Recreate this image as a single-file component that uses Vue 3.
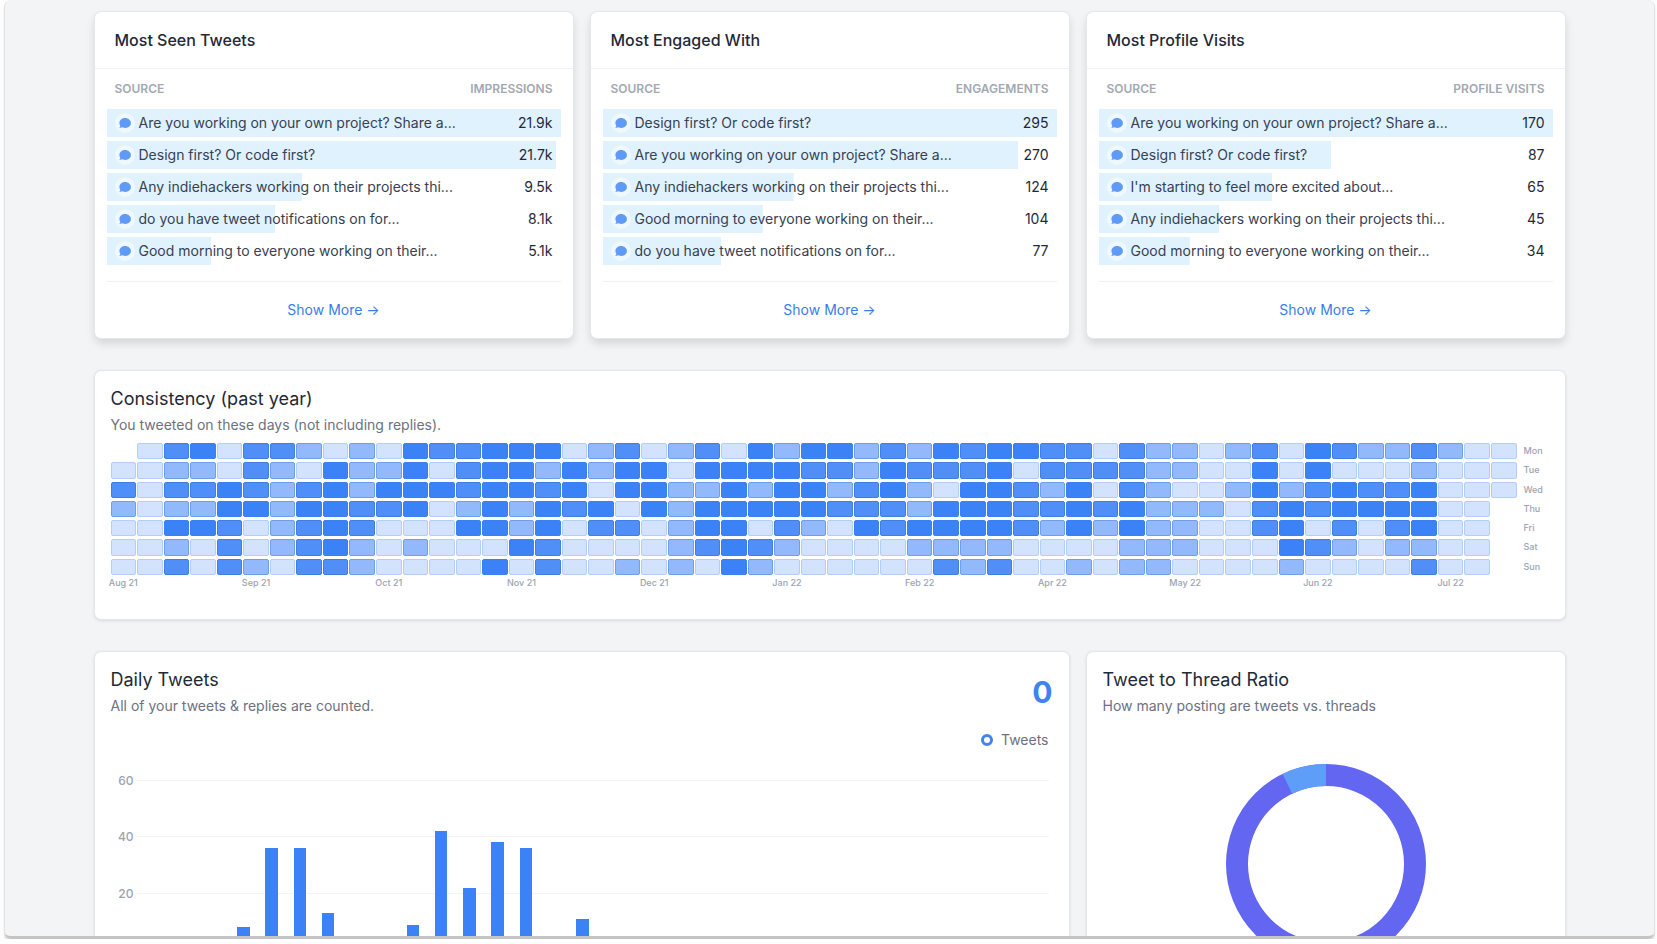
<script setup>
const tables = [
  {
    title: 'Most Seen Tweets',
    metric: 'Impressions',
    rows: [
      ['Are you working on your own project? Share a...', '21.9k', 100],
      ['Design first? Or code first?', '21.7k', 99],
      ['Any indiehackers working on their projects thi...', '9.5k', 43],
      ['do you have tweet notifications on for...', '8.1k', 37],
      ['Good morning to everyone working on their...', '5.1k', 23],
    ],
  },
  {
    title: 'Most Engaged With',
    metric: 'Engagements',
    rows: [
      ['Design first? Or code first?', '295', 100],
      ['Are you working on your own project? Share a...', '270', 91.5],
      ['Any indiehackers working on their projects thi...', '124', 42],
      ['Good morning to everyone working on their...', '104', 35.2],
      ['do you have tweet notifications on for...', '77', 26],
    ],
  },
  {
    title: 'Most Profile Visits',
    metric: 'Profile Visits',
    rows: [
      ['Are you working on your own project? Share a...', '170', 100],
      ['Design first? Or code first?', '87', 51.2],
      ["I'm starting to feel more excited about...", '65', 38.2],
      ['Any indiehackers working on their projects thi...', '45', 26.5],
      ['Good morning to everyone working on their...', '34', 20],
    ],
  },
]

// One digit per week: 0 is outside the range, 1 to 4 is the activity level.
const days = [
  ['Mon', '01341332121433444123123142442324344331322123143223211'],
  ['Tue', '11221321422413442424414444332433341333322114141112111'],
  ['Wed', '31334323424443443414422424423421443241321124234334111'],
  ['Thu', '21224424433412424341424444433324443343422213434444110'],
  ['Fri', '11443123431114424133124413214344443242422113413134110'],
  ['Sat', '11213123421211143111123432111122221111222111432122110'],
  ['Sun', '11313213321111413112121421111113231121221111211113110'],
]
const months = ['Aug 21', 'Sep 21', 'Oct 21', 'Nov 21', 'Dec 21', 'Jan 22', 'Feb 22', 'Apr 22', 'May 22', 'Jun 22', 'Jul 22']

const daily = [0, 0, 0, 8, 36, 36, 13, 0, 0, 9, 42, 22, 38, 36, 0, 11, 0, 0, 0, 0, 0, 0, 0, 0, 0, 0, 0, 0, 0, 0, 0, 0]
const axis = ['60', '40', '20', '']

const ring = 2 * Math.PI * 89
const threadShare = 0.073
</script>

<template>
  <div class="window">
    <main class="content">
      <div class="thirds">
        <section v-for="t in tables" :key="t.title" class="card raised">
          <h2 class="table-title">{{ t.title }}</h2>
          <div class="table-body">
            <table class="ranking">
              <thead>
                <tr>
                  <th scope="col">Source</th>
                  <th scope="col">{{ t.metric }}</th>
                </tr>
              </thead>
              <tbody>
                <tr v-for="r in t.rows" :key="r[0]" :style="{ backgroundSize: r[2] + '% 100%' }">
                  <td class="source">
                    <span class="bubble">
                      <svg viewBox="0 0 20 20" width="14" height="14" aria-hidden="true">
                        <path fill-rule="evenodd" clip-rule="evenodd" d="M18.500 10c0 3.866-3.582 7-8 7a8.841 8.841 0 01-4.083-.98L2 17l1.338-3.123C2.493 12.767 2 11.434 2 10c0-3.866 3.582-7 8-7s8.500 3.134 8.500 7z" />
                      </svg>
                    </span>
                    {{ r[0] }}
                  </td>
                  <td class="value">{{ r[1] }}</td>
                </tr>
              </tbody>
            </table>
            <div class="more"><a href="#">Show More →</a></div>
          </div>
        </section>
      </div>

      <section class="card padded consistency">
        <h2>Consistency (past year)</h2>
        <p class="sub">You tweeted on these days (not including replies).</p>
        <div class="heat">
          <template v-for="d in days" :key="d[0]">
            <i v-for="(level, i) in d[1]" :key="i" :class="'cell l' + level"></i>
            <span class="day">{{ d[0] }}</span>
          </template>
        </div>
        <div class="months">
          <span v-for="(m, i) in months" :key="m" class="month" :style="{ gridColumn: i * 5 + 1 }">{{ m }}</span>
        </div>
      </section>

      <div class="thirds">
        <section class="card padded wide">
          <header class="chart-head">
            <div>
              <h2>Daily Tweets</h2>
              <p class="sub">All of your tweets &amp; replies are counted.</p>
            </div>
            <strong class="total">0</strong>
          </header>
          <div class="legend"><span class="dot"></span>Tweets</div>
          <div class="chart">
            <div class="axis">
              <div v-for="a in axis" :key="a" class="tick"><span>{{ a }}</span></div>
            </div>
            <div class="bars">
              <div v-for="(v, i) in daily" :key="i" class="slot">
                <div class="bar" :style="{ height: (v / 60) * 100 + '%' }"></div>
              </div>
            </div>
          </div>
        </section>

        <section class="card padded">
          <h2>Tweet to Thread Ratio</h2>
          <p class="sub">How many posting are tweets vs. threads</p>
          <div class="donut">
            <svg viewBox="0 0 200 200" width="200" height="200" role="img" aria-label="Tweets and threads">
              <circle class="tweets" cx="100" cy="100" r="89" />
              <circle
                class="threads" cx="100" cy="100" r="89"
                transform="rotate(-90 100 100)"
                :stroke-dasharray="`${ring * threadShare} ${ring * (1 - threadShare)}`"
                :stroke-dashoffset="ring * threadShare"
              />
            </svg>
          </div>
        </section>
      </div>
    </main>
  </div>
</template>

<style>
html,
body {
  background: #fdfdfd;
}
</style>

<style scoped>
* {
  box-sizing: border-box;
}
.window {
  height: calc(100vh - 5px);
  margin: 0 3px 0 5px;
  overflow: hidden;
  background: #f3f4f6;
  border-bottom: 3px solid #c4c4c4;
  border-radius: 6px;
  box-shadow: 0 1px 0 1px #e2e2e2, 0 2px 2px 1px #ebebeb;
  font-family: Inter, "Liberation Sans", sans-serif;
  color: #1f2937;
}
.content {
  display: flex;
  flex-direction: column;
  gap: 33px;
  max-width: 1470px;
  margin: 0 auto;
  padding-top: 12px;
}
.thirds {
  display: grid;
  grid-template-columns: repeat(3, minmax(0, 1fr));
  gap: 18px;
}
.wide {
  grid-column: span 2;
}
h2,
p {
  margin: 0;
}
.card {
  background: #fff;
  border-radius: 6px;
  box-shadow: 0 0 0 1px #e5e6e8, 0 1px 3px 1px #d9dadd;
}
.raised {
  box-shadow: 0 0 0 1px #e5e6e8, 0 5px 10px rgba(0, 0, 0, 0.14);
}
.padded {
  padding: 16px;
}
.consistency {
  padding-bottom: 28px;
}
.table-title {
  padding: 16px 20px;
  border-bottom: 1px solid #f0f1f3;
  font-size: 16px;
  line-height: 24px;
  font-weight: 500;
}
.table-body {
  padding: 0 12px;
}
.ranking {
  display: block;
  font-size: 14px;
  line-height: 20px;
}
.ranking thead,
.ranking tbody {
  display: flex;
  flex-direction: column;
  gap: 4px;
}
.ranking tr {
  display: flex;
  align-items: center;
  justify-content: space-between;
  padding: 0 8px;
}
.ranking thead tr {
  height: 40px;
}
.ranking th {
  padding: 0;
  font-size: 12px;
  font-weight: 600;
  text-transform: uppercase;
  color: #a3a8b2;
}
.ranking tbody tr {
  height: 28px;
  background: linear-gradient(#e0f2fe, #e0f2fe) no-repeat left;
}
.ranking td {
  padding: 0;
}
.source {
  display: flex;
  align-items: center;
  gap: 4px;
  color: #374151;
  white-space: nowrap;
}
.bubble {
  display: grid;
  place-items: center;
  width: 20px;
  height: 20px;
  border-radius: 50%;
  background: #eff8ff;
}
.bubble svg {
  fill: #609af6;
}
.more {
  margin-top: 16px;
  border-top: 1px solid #f0f1f3;
  text-align: center;
  font-size: 14px;
  line-height: 56px;
}
.more a {
  color: #3b7de9;
  text-decoration: none;
}
.padded h2 {
  font-size: 18px;
  line-height: 24px;
  font-weight: 400;
}
.sub {
  margin-top: 4px;
  font-size: 14px;
  line-height: 20px;
  color: #6b7280;
}
.heat,
.months {
  display: grid;
  grid-template-columns: repeat(53, minmax(0, 1fr)) 31px;
  column-gap: 1px;
}
.heat {
  grid-template-rows: repeat(7, minmax(0, 1fr));
  row-gap: 3px;
  height: 132px;
  margin-top: 8px;
}
.cell {
  border: 1px solid transparent;
  border-radius: 2px;
}
.l1 {
  background: #d3e2fe;
  border-color: #b3cef8;
}
.l2 {
  background: #92b9fc;
  border-color: #6f9eea;
}
.l3 {
  background: #4f8ff7;
  border-color: #417ee2;
}
.l4 {
  background: #3b82f6;
  border-color: #3b80f1;
}
.day,
.month {
  font-size: 9px;
  line-height: 16px;
  font-weight: 500;
  color: #9ca3af;
}
.day {
  padding-left: 6px;
}
.month {
  justify-self: center;
  white-space: nowrap;
}
.chart-head {
  display: flex;
  justify-content: space-between;
  align-items: center;
}
.total {
  font-size: 30px;
  line-height: 48px;
  font-weight: 700;
  color: #3f83f2;
}
.legend {
  display: flex;
  align-items: center;
  justify-content: flex-end;
  gap: 8px;
  margin-top: 14px;
  padding-right: 4px;
  font-size: 14px;
  line-height: 20px;
  color: #6b7280;
}
.dot {
  width: 12px;
  height: 12px;
  border: 3px solid #4583ea;
  border-radius: 50%;
}
.chart {
  display: grid;
  grid-template-columns: minmax(0, 1fr);
  margin: 30px 4px 24px 7px;
}
.axis,
.bars {
  grid-area: 1 / 1;
  height: 170px;
}
.axis {
  display: flex;
  flex-direction: column;
  justify-content: space-between;
}
.tick {
  display: flex;
  align-items: center;
  gap: 3px;
  height: 1px;
  font-size: 12px;
  font-weight: 500;
  color: #9ca3af;
}
.tick span {
  width: 16px;
  text-align: right;
}
.tick::after {
  content: "";
  flex: 1;
  height: 1px;
  background: #f3f4f6;
}
.bars {
  display: flex;
  margin-left: 27px;
}
.slot {
  flex: 1;
  display: flex;
  align-items: flex-end;
  justify-content: center;
}
.bar {
  width: 44%;
  background: #3b82f6;
}
.donut {
  display: flex;
  justify-content: center;
  margin-top: 48px;
}
.donut circle {
  fill: none;
  stroke-width: 22;
}
.tweets {
  stroke: #6366f1;
}
.threads {
  stroke: #5f9ef8;
}
</style>
